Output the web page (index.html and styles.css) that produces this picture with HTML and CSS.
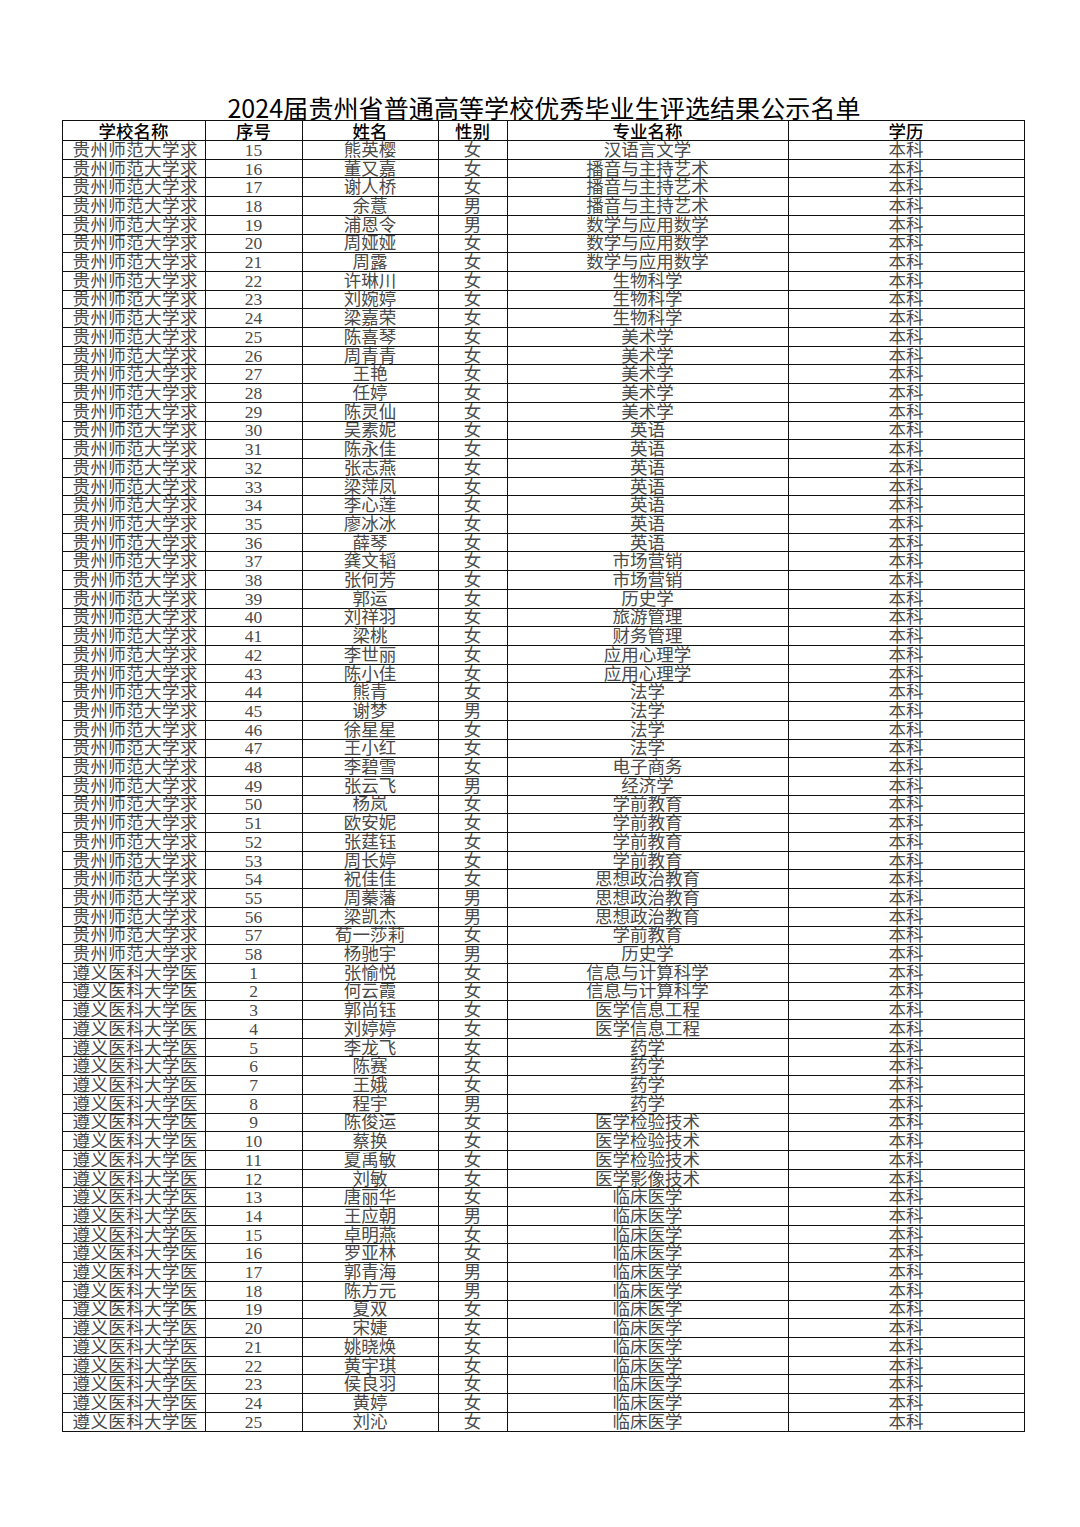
FILE: index.html
```html
<!DOCTYPE html>
<html lang="zh-CN">
<head>
<meta charset="utf-8">
<title>2024届贵州省普通高等学校优秀毕业生评选结果公示名单</title>
<link rel="stylesheet" href="styles.css">
</head>
<body>
<div class="page">
<h1 class="title">2024届贵州省普通高等学校优秀毕业生评选结果公示名单</h1>
<table class="list">
<colgroup>
<col class="c-school"><col class="c-no"><col class="c-name"><col class="c-sex"><col class="c-major"><col class="c-edu">
</colgroup>
<thead>
<tr><th>学校名称</th><th>序号</th><th>姓名</th><th>性别</th><th>专业名称</th><th>学历</th></tr>
</thead>
<tbody>
<tr><td class="school">贵州师范大学求</td><td>15</td><td>熊英樱</td><td>女</td><td>汉语言文学</td><td>本科</td></tr>
<tr><td class="school">贵州师范大学求</td><td>16</td><td>董又嘉</td><td>女</td><td>播音与主持艺术</td><td>本科</td></tr>
<tr><td class="school">贵州师范大学求</td><td>17</td><td>谢人桥</td><td>女</td><td>播音与主持艺术</td><td>本科</td></tr>
<tr><td class="school">贵州师范大学求</td><td>18</td><td>余薏</td><td>男</td><td>播音与主持艺术</td><td>本科</td></tr>
<tr><td class="school">贵州师范大学求</td><td>19</td><td>浦恩令</td><td>男</td><td>数学与应用数学</td><td>本科</td></tr>
<tr><td class="school">贵州师范大学求</td><td>20</td><td>周娅娅</td><td>女</td><td>数学与应用数学</td><td>本科</td></tr>
<tr><td class="school">贵州师范大学求</td><td>21</td><td>周露</td><td>女</td><td>数学与应用数学</td><td>本科</td></tr>
<tr><td class="school">贵州师范大学求</td><td>22</td><td>许琳川</td><td>女</td><td>生物科学</td><td>本科</td></tr>
<tr><td class="school">贵州师范大学求</td><td>23</td><td>刘婉婷</td><td>女</td><td>生物科学</td><td>本科</td></tr>
<tr><td class="school">贵州师范大学求</td><td>24</td><td>梁嘉荣</td><td>女</td><td>生物科学</td><td>本科</td></tr>
<tr><td class="school">贵州师范大学求</td><td>25</td><td>陈喜琴</td><td>女</td><td>美术学</td><td>本科</td></tr>
<tr><td class="school">贵州师范大学求</td><td>26</td><td>周青青</td><td>女</td><td>美术学</td><td>本科</td></tr>
<tr><td class="school">贵州师范大学求</td><td>27</td><td>王艳</td><td>女</td><td>美术学</td><td>本科</td></tr>
<tr><td class="school">贵州师范大学求</td><td>28</td><td>任婷</td><td>女</td><td>美术学</td><td>本科</td></tr>
<tr><td class="school">贵州师范大学求</td><td>29</td><td>陈灵仙</td><td>女</td><td>美术学</td><td>本科</td></tr>
<tr><td class="school">贵州师范大学求</td><td>30</td><td>吴素妮</td><td>女</td><td>英语</td><td>本科</td></tr>
<tr><td class="school">贵州师范大学求</td><td>31</td><td>陈永佳</td><td>女</td><td>英语</td><td>本科</td></tr>
<tr><td class="school">贵州师范大学求</td><td>32</td><td>张志燕</td><td>女</td><td>英语</td><td>本科</td></tr>
<tr><td class="school">贵州师范大学求</td><td>33</td><td>梁萍凤</td><td>女</td><td>英语</td><td>本科</td></tr>
<tr><td class="school">贵州师范大学求</td><td>34</td><td>李心莲</td><td>女</td><td>英语</td><td>本科</td></tr>
<tr><td class="school">贵州师范大学求</td><td>35</td><td>廖冰冰</td><td>女</td><td>英语</td><td>本科</td></tr>
<tr><td class="school">贵州师范大学求</td><td>36</td><td>薛琴</td><td>女</td><td>英语</td><td>本科</td></tr>
<tr><td class="school">贵州师范大学求</td><td>37</td><td>龚文韬</td><td>女</td><td>市场营销</td><td>本科</td></tr>
<tr><td class="school">贵州师范大学求</td><td>38</td><td>张何芳</td><td>女</td><td>市场营销</td><td>本科</td></tr>
<tr><td class="school">贵州师范大学求</td><td>39</td><td>郭运</td><td>女</td><td>历史学</td><td>本科</td></tr>
<tr><td class="school">贵州师范大学求</td><td>40</td><td>刘祥羽</td><td>女</td><td>旅游管理</td><td>本科</td></tr>
<tr><td class="school">贵州师范大学求</td><td>41</td><td>梁桃</td><td>女</td><td>财务管理</td><td>本科</td></tr>
<tr><td class="school">贵州师范大学求</td><td>42</td><td>李世丽</td><td>女</td><td>应用心理学</td><td>本科</td></tr>
<tr><td class="school">贵州师范大学求</td><td>43</td><td>陈小佳</td><td>女</td><td>应用心理学</td><td>本科</td></tr>
<tr><td class="school">贵州师范大学求</td><td>44</td><td>熊青</td><td>女</td><td>法学</td><td>本科</td></tr>
<tr><td class="school">贵州师范大学求</td><td>45</td><td>谢梦</td><td>男</td><td>法学</td><td>本科</td></tr>
<tr><td class="school">贵州师范大学求</td><td>46</td><td>徐星星</td><td>女</td><td>法学</td><td>本科</td></tr>
<tr><td class="school">贵州师范大学求</td><td>47</td><td>王小红</td><td>女</td><td>法学</td><td>本科</td></tr>
<tr><td class="school">贵州师范大学求</td><td>48</td><td>李碧雪</td><td>女</td><td>电子商务</td><td>本科</td></tr>
<tr><td class="school">贵州师范大学求</td><td>49</td><td>张云飞</td><td>男</td><td>经济学</td><td>本科</td></tr>
<tr><td class="school">贵州师范大学求</td><td>50</td><td>杨岚</td><td>女</td><td>学前教育</td><td>本科</td></tr>
<tr><td class="school">贵州师范大学求</td><td>51</td><td>欧安妮</td><td>女</td><td>学前教育</td><td>本科</td></tr>
<tr><td class="school">贵州师范大学求</td><td>52</td><td>张莛钰</td><td>女</td><td>学前教育</td><td>本科</td></tr>
<tr><td class="school">贵州师范大学求</td><td>53</td><td>周长婷</td><td>女</td><td>学前教育</td><td>本科</td></tr>
<tr><td class="school">贵州师范大学求</td><td>54</td><td>祝佳佳</td><td>女</td><td>思想政治教育</td><td>本科</td></tr>
<tr><td class="school">贵州师范大学求</td><td>55</td><td>周蓁藩</td><td>男</td><td>思想政治教育</td><td>本科</td></tr>
<tr><td class="school">贵州师范大学求</td><td>56</td><td>梁凯杰</td><td>男</td><td>思想政治教育</td><td>本科</td></tr>
<tr><td class="school">贵州师范大学求</td><td>57</td><td>荀一莎莉</td><td>女</td><td>学前教育</td><td>本科</td></tr>
<tr><td class="school">贵州师范大学求</td><td>58</td><td>杨驰宇</td><td>男</td><td>历史学</td><td>本科</td></tr>
<tr><td class="school">遵义医科大学医</td><td>1</td><td>张愉悦</td><td>女</td><td>信息与计算科学</td><td>本科</td></tr>
<tr><td class="school">遵义医科大学医</td><td>2</td><td>何云霞</td><td>女</td><td>信息与计算科学</td><td>本科</td></tr>
<tr><td class="school">遵义医科大学医</td><td>3</td><td>郭尚钰</td><td>女</td><td>医学信息工程</td><td>本科</td></tr>
<tr><td class="school">遵义医科大学医</td><td>4</td><td>刘婷婷</td><td>女</td><td>医学信息工程</td><td>本科</td></tr>
<tr><td class="school">遵义医科大学医</td><td>5</td><td>李龙飞</td><td>女</td><td>药学</td><td>本科</td></tr>
<tr><td class="school">遵义医科大学医</td><td>6</td><td>陈赛</td><td>女</td><td>药学</td><td>本科</td></tr>
<tr><td class="school">遵义医科大学医</td><td>7</td><td>王娥</td><td>女</td><td>药学</td><td>本科</td></tr>
<tr><td class="school">遵义医科大学医</td><td>8</td><td>程宇</td><td>男</td><td>药学</td><td>本科</td></tr>
<tr><td class="school">遵义医科大学医</td><td>9</td><td>陈俊运</td><td>女</td><td>医学检验技术</td><td>本科</td></tr>
<tr><td class="school">遵义医科大学医</td><td>10</td><td>蔡换</td><td>女</td><td>医学检验技术</td><td>本科</td></tr>
<tr><td class="school">遵义医科大学医</td><td>11</td><td>夏禹敏</td><td>女</td><td>医学检验技术</td><td>本科</td></tr>
<tr><td class="school">遵义医科大学医</td><td>12</td><td>刘敏</td><td>女</td><td>医学影像技术</td><td>本科</td></tr>
<tr><td class="school">遵义医科大学医</td><td>13</td><td>唐丽华</td><td>女</td><td>临床医学</td><td>本科</td></tr>
<tr><td class="school">遵义医科大学医</td><td>14</td><td>王应朝</td><td>男</td><td>临床医学</td><td>本科</td></tr>
<tr><td class="school">遵义医科大学医</td><td>15</td><td>卓明燕</td><td>女</td><td>临床医学</td><td>本科</td></tr>
<tr><td class="school">遵义医科大学医</td><td>16</td><td>罗亚林</td><td>女</td><td>临床医学</td><td>本科</td></tr>
<tr><td class="school">遵义医科大学医</td><td>17</td><td>郭青海</td><td>男</td><td>临床医学</td><td>本科</td></tr>
<tr><td class="school">遵义医科大学医</td><td>18</td><td>陈方元</td><td>男</td><td>临床医学</td><td>本科</td></tr>
<tr><td class="school">遵义医科大学医</td><td>19</td><td>夏双</td><td>女</td><td>临床医学</td><td>本科</td></tr>
<tr><td class="school">遵义医科大学医</td><td>20</td><td>宋婕</td><td>女</td><td>临床医学</td><td>本科</td></tr>
<tr><td class="school">遵义医科大学医</td><td>21</td><td>姚晓焕</td><td>女</td><td>临床医学</td><td>本科</td></tr>
<tr><td class="school">遵义医科大学医</td><td>22</td><td>黄宇琪</td><td>女</td><td>临床医学</td><td>本科</td></tr>
<tr><td class="school">遵义医科大学医</td><td>23</td><td>侯良羽</td><td>女</td><td>临床医学</td><td>本科</td></tr>
<tr><td class="school">遵义医科大学医</td><td>24</td><td>黄婷</td><td>女</td><td>临床医学</td><td>本科</td></tr>
<tr><td class="school">遵义医科大学医</td><td>25</td><td>刘沁</td><td>女</td><td>临床医学</td><td>本科</td></tr>
</tbody>
</table>
</div>
</body>
</html>
```

FILE: styles.css
```css
html, body {
  margin: 0;
  padding: 0;
  background: #ffffff;
}

.page {
  width: 962px;
  padding: 94px 0 0 62px;
  display: flex;
  flex-direction: column;
  align-items: center;
}

.title {
  margin: 0 0 0 2px;
  font-family: "Noto Sans CJK SC", sans-serif;
  font-weight: 400;
  font-size: 25px;
  line-height: 26px;
  height: 26px;
  color: #000;
  letter-spacing: 0.1px;
  white-space: nowrap;
}

.list {
  border-collapse: collapse;
  table-layout: fixed;
  width: 962px;
  border: 1.5px solid #111;
}

.c-school { width: 143px; }
.c-no { width: 97px; }
.c-name { width: 136px; }
.c-sex { width: 69px; }
.c-major { width: 281px; }
.c-edu { width: 236px; }

.list th {
  height: 19px;
  padding: 0;
  border: 1px solid #111;
  font-family: "Noto Sans CJK SC", sans-serif;
  font-weight: 500;
  font-size: 17.5px;
  line-height: 0;
  color: #000;
  text-align: center;
  vertical-align: middle;
  white-space: nowrap;
  overflow: visible;
}

.list td {
  height: 18.71px;
  padding: 0;
  box-sizing: border-box;
  border: 1px solid #111;
  font-family: "Liberation Serif", "Noto Sans CJK SC", serif;
  font-weight: 400;
  font-size: 17.5px;
  line-height: 0;
  color: #4a4a4a;
  text-align: center;
  vertical-align: middle;
  white-space: nowrap;
  overflow: visible;
}

.list td.school {
  text-align: left;
  padding-left: 10px;
  letter-spacing: 0.4px;
}
```
